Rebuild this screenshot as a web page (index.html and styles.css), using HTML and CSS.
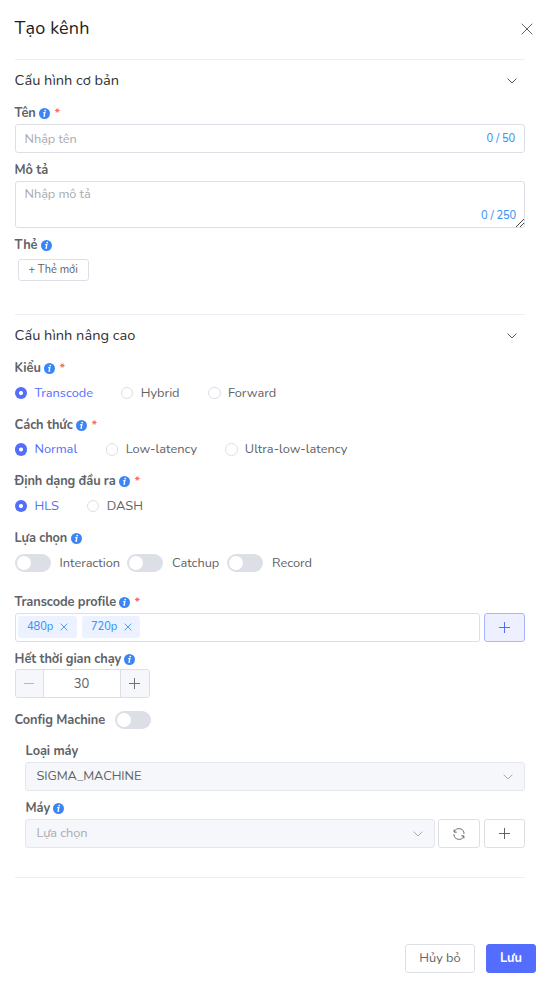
FILE: index.html
```html
<!DOCTYPE html>
<html lang="vi">
<head>
<meta charset="utf-8">
<title>Tạo kênh</title>
<link rel="stylesheet" href="styles.css">
</head>
<body>
<svg class="defs" aria-hidden="true">
  <symbol id="info" viewBox="0 0 11 11"><circle cx="5.5" cy="5.5" r="5.5" fill="#3b86f7"/><circle cx="6.2" cy="2.6" r=".9" fill="#fff"/><path d="M4.2 4.7h1.6L5.1 8h1" fill="none" stroke="#fff" stroke-width="1.3"/></symbol>
  <symbol id="close" viewBox="0 0 12 12"><path d="M.7.7l10.6 10.6M11.3.7L.7 11.3" fill="none" stroke="currentColor"/></symbol>
  <symbol id="close-small" viewBox="0 0 8 8"><path d="M.6.6l6.8 6.8M7.4.6L.6 7.4" fill="none" stroke="currentColor" stroke-width=".9"/></symbol>
  <symbol id="down" viewBox="0 0 10 6"><path d="M.6.6L5 5 9.4.6" fill="none" stroke="currentColor"/></symbol>
  <symbol id="plus" viewBox="0 0 11 11"><path d="M5.5 0v11M0 5.5h11" fill="none" stroke="currentColor"/></symbol>
  <symbol id="refresh" viewBox="0 0 12 12"><path d="M1.1 1.5v2.7h2.7M1.3 4A5 5 0 0 1 11 6M10.9 10.5V7.8H8.2M10.7 8A5 5 0 0 1 1 6" fill="none" stroke="currentColor" stroke-width=".9"/></symbol>
</svg>
<div class="drawer">
  <header class="head"><h1>Tạo kênh</h1><svg class="x"><use href="#close"/></svg></header>
  <main>
    <section class="basic">
      <div class="title"><h2>Cấu hình cơ bản</h2><svg class="chev"><use href="#down"/></svg></div>
      <div class="label"><b class="l-ten">Tên</b><svg class="i"><use href="#info"/></svg><em>*</em></div>
      <div class="box input"><span class="ph">Nhập tên</span><span class="count">0 / 50</span></div>
      <div class="label"><b>Mô tả</b></div>
      <div class="box area"><span class="ph">Nhập mô tả</span><span class="count">0 / 250</span><svg class="grip" viewBox="0 0 8 8"><path d="M0 8L8 0M4 8l4-4" stroke="#444" fill="none"/></svg></div>
      <div class="label"><b class="l-the">Thẻ</b><svg class="i"><use href="#info"/></svg></div>
      <button class="newtag">+ Thẻ mới</button>
    </section>
    <section class="advanced">
      <div class="title"><h2>Cấu hình nâng cao</h2><svg class="chev"><use href="#down"/></svg></div>
      <div class="label"><b class="l-kieu">Kiểu</b><svg class="i"><use href="#info"/></svg><em>*</em></div>
      <div class="row r1"><span class="radio on">Transcode</span><span class="radio">Hybrid</span><span class="radio">Forward</span></div>
      <div class="label"><b class="l-cach">Cách thức</b><svg class="i"><use href="#info"/></svg><em>*</em></div>
      <div class="row r2"><span class="radio on"><span>Normal</span></span><span class="radio"><span>Low-latency</span></span><span class="radio"><span>Ultra-low-latency</span></span></div>
      <div class="label"><b class="l-dinh">Định dạng đầu ra</b><svg class="i"><use href="#info"/></svg><em>*</em></div>
      <div class="row r3"><span class="radio on">HLS</span><span class="radio">DASH</span></div>
      <div class="label"><b class="l-lua">Lựa chọn</b><svg class="i"><use href="#info"/></svg></div>
      <div class="row switches"><span class="opt o1"><i class="switch"></i>Interaction</span><span class="opt o2"><i class="switch"></i>Catchup</span><span class="opt o3"><i class="switch"></i>Record</span></div>
      <div class="label"><b class="l-profile">Transcode profile</b><svg class="i"><use href="#info"/></svg><em>*</em></div>
      <div class="line">
        <div class="box tags"><span class="tag">480p<svg><use href="#close-small"/></svg></span><span class="tag second">720p<svg><use href="#close-small"/></svg></span></div>
        <button class="btn primary-soft"><svg class="plus"><use href="#plus"/></svg></button>
      </div>
      <div class="label"><b class="l-het">Hết thời gian chạy</b><svg class="i"><use href="#info"/></svg></div>
      <div class="box number"><span class="step minus"></span><span class="value">30</span><span class="step"><svg class="plus small"><use href="#plus"/></svg></span></div>
      <div class="config"><b class="l-config">Config Machine</b><i class="switch"></i></div>
      <div class="machine">
        <div class="label"><b>Loại máy</b></div>
        <div class="box select"><span class="text">SIGMA_MACHINE</span><svg class="chev"><use href="#down"/></svg></div>
        <div class="label"><b class="l-may">Máy</b><svg class="i"><use href="#info"/></svg></div>
        <div class="line">
          <div class="box select"><span class="ph text">Lựa chọn</span><svg class="chev"><use href="#down"/></svg></div>
          <button class="btn wide"><svg class="refresh"><use href="#refresh"/></svg></button>
          <button class="btn"><svg class="plus"><use href="#plus"/></svg></button>
        </div>
      </div>
    </section>
  </main>
  <footer><button class="cancel">Hủy bỏ</button><button class="save">Lưu</button></footer>
</div>
</body>
</html>
```
FILE: styles.css
```css
*, *::before { box-sizing: border-box; }
body { margin: 0; background: #fff; color: #606266; font: 12.8px/22px Nunito, Lato, "Noto Sans", sans-serif; white-space: nowrap; }
button { font: inherit; color: inherit; padding: 0; background: #fff; border: 1px solid #dcdfe6; border-radius: 3px; }
svg { display: block; flex: none; }
.defs { position: absolute; width: 0; height: 0; }
.drawer { height: 991px; display: flex; flex-direction: column; }
.head { height: 59px; padding: 0 15px 0 14.5px; display: flex; justify-content: space-between; align-items: flex-start; }
h1, h2 { margin: 0; font-weight: 400; }
h1 { font-size: 18px; line-height: 24px; margin-top: 16px; color: #1c1d20; letter-spacing: .15px; }
.x { width: 12px; height: 12px; margin-top: 23px; color: #606266; }
main { margin: 0 23.4px 0 14.6px; flex: 1; }
section { border-top: 1px solid #ebeef5; }
.basic { height: 255px; }
.advanced { height: 564px; border-bottom: 1px solid #ebeef5; }
.title { height: 42px; display: flex; align-items: center; justify-content: space-between; padding-right: 8px; color: #303133; }
h2 { font-size: 14.6px; line-height: 22px; padding-bottom: 2px; }
.chev { width: 10px; height: 6px; }
.title .chev { color: #55575c; }
.label { height: 22px; display: flex; align-items: center; }
b { font-weight: 700; letter-spacing: -.08px; }
.i { width: 11px; height: 11px; margin-top: 1px; }
em { font-style: normal; font-weight: 700; font-size: 12.6px; color: #f56c6c; margin-left: 5px; }
.box { border: 1px solid #dcdfe6; border-radius: 3px; }
.ph { color: #a8abb2; letter-spacing: -.08px; }
.count { color: #3b95f8; font-size: 11.1px; font-weight: 500; letter-spacing: -.08px; }
.input { height: 29px; margin-bottom: 6px; padding: 0 8.5px 0 9px; display: flex; align-items: center; justify-content: space-between; }
.area { position: relative; height: 47px; margin-bottom: 6px; padding: 1px 7.5px 0 9px; display: flex; justify-content: space-between; }
.area .count { align-self: flex-end; }
.grip { position: absolute; width: 8px; height: 8px; right: 0; bottom: 0; }
.newtag { display: block; width: 71px; height: 22px; margin: 3px 0 0 3px; font-size: 11px; line-height: 18px; padding-bottom: 1px; }
.row { height: 28px; margin-bottom: 7px; display: flex; align-items: center; }
.r1, .r2 { margin-bottom: 6.5px; }
.r2 span span { padding-bottom: 2px; }
.radio { display: flex; align-items: center; gap: 7.3px; }
.radio::before { content: ""; width: 12.6px; height: 12.6px; border: 1px solid #dcdfe6; border-radius: 50%; }
.on { color: #536dfe; }
.on::before { border: 0; background: radial-gradient(circle, #fff 1.6px, #536dfe 2.4px); }
.r1 > .radio:nth-child(1) { width: 106.3px; }
.r1 > .radio:nth-child(2) { width: 87.2px; }
.r2 > .radio:nth-child(1) { width: 91.2px; }
.r2 > .radio:nth-child(2) { width: 119.2px; }
.r3 > .radio:nth-child(1) { width: 72.3px; }
.switches { margin-bottom: 14px; }
.opt { display: flex; align-items: center; gap: 9px; letter-spacing: -.05px; }
.o1 { width: 112px; }
.o2 { width: 100px; }
.o2, .o3 { gap: 9.5px; }
.switch { display: block; width: 36px; height: 18px; padding: 2px; border-radius: 9px; background: #dcdfe6; }
.switch::before { content: ""; display: block; width: 14px; height: 14px; border-radius: 50%; background: #fff; }
.line { display: flex; gap: 4px; height: 29px; }
.line .box { flex: 1; }
.tags { display: flex; gap: 5px; padding: 2px; }
.tag { width: 59px; height: 22px; padding: 0 8.5px 0 9.3px; border-radius: 3px; background: #ecf2ff; color: #3b95f8; font-size: 11.1px; font-weight: 500; line-height: 24px; display: flex; align-items: center; justify-content: space-between; }
.second { width: 58px; padding-right: 7.5px; }
.tag svg { width: 8px; height: 8px; }
.btn { width: 41px; height: 29px; display: flex; align-items: center; justify-content: center; }
.wide { width: 42px; margin-left: -.6px; }
.plus { width: 11px; height: 11px; }
.small { color: #707278; }
.refresh { width: 12px; height: 12px; }
.primary-soft { background: #eef0ff; border-color: #a9b6ff; color: #536dfe; }
.line + .label { margin-top: 6px; height: 21px; }
.number { width: 135px; height: 29px; display: flex; overflow: hidden; }
.step { width: 28px; background: #f5f7fa; border-right: 1px solid #dcdfe6; display: flex; align-items: center; justify-content: center; }
.step:last-child { width: 29px; border-right: 0; border-left: 1px solid #dcdfe6; }
.minus::before { content: ""; width: 10px; height: 1px; background: #b5b8bf; }
.value { flex: 1; text-align: center; line-height: 28px; font-size: 13px; }
.config { height: 28px; margin: 8px 0 6px; display: flex; align-items: center; }
.machine { margin-left: 10.4px; }
.machine b { padding-left: .6px; }
.select { height: 29px; padding: 0 11px 0 10.5px; background: #f5f7fa; border-color: #e4e7ed; display: flex; align-items: center; justify-content: space-between; }
.line .select { margin-right: -.6px; }
.select .chev { color: #a8abb2; }
.text { padding-bottom: 1px; letter-spacing: -.1px; }
.select + .label { margin-top: 6px; }
.l-ten { width: 24px; } .l-the { width: 26px; } .l-kieu { width: 29px; } .l-cach { width: 61px; }
.l-dinh, .l-profile { width: 104px; } .l-lua { width: 56px; } .l-het { width: 109px; } .l-config { width: 100px; } .l-may { width: 28px; }
footer { height: 47px; padding-right: 12px; display: flex; justify-content: flex-end; gap: 11px; }
footer button { height: 29px; padding-bottom: 1px; }
.cancel { width: 70px; }
.save { width: 50px; background: #536dfe; border-color: #536dfe; color: #fff; font-weight: 700; }
```
